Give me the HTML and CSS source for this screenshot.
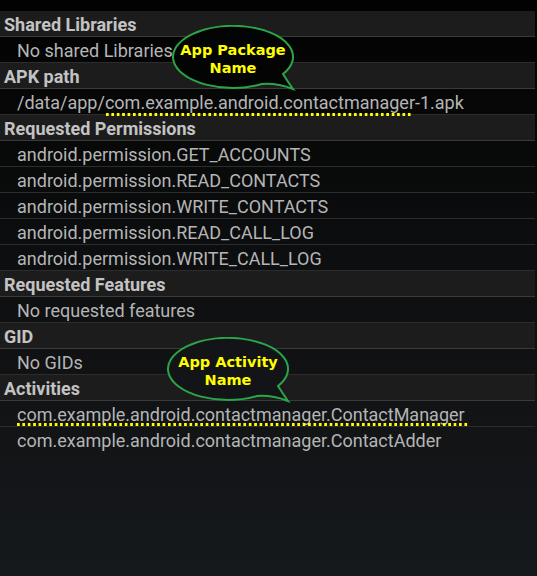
FILE: index.html
```html
<!DOCTYPE html>
<html>
<head>
<meta charset="utf-8">
<link rel="stylesheet" href="styles.css">
</head>
<body>
<div class="screen">
  <div class="list">
    <div class="hdr">Shared Libraries</div>
    <div class="item">No shared Libraries</div>
    <div class="hdr">APK path</div>
    <div class="item">/data/app/com.example.android.contactmanager-1.apk</div>
    <div class="hdr">Requested Permissions</div>
    <div class="item">android.permission.GET_ACCOUNTS</div>
    <div class="item">android.permission.READ_CONTACTS</div>
    <div class="item">android.permission.WRITE_CONTACTS</div>
    <div class="item">android.permission.READ_CALL_LOG</div>
    <div class="item">android.permission.WRITE_CALL_LOG</div>
    <div class="hdr">Requested Features</div>
    <div class="item">No requested features</div>
    <div class="hdr">GID</div>
    <div class="item">No GIDs</div>
    <div class="hdr">Activities</div>
    <div class="item">com.example.android.contactmanager.ContactManager</div>
    <div class="item last">com.example.android.contactmanager.ContactAdder</div>
  </div>

  <div class="dots dots-pkg"></div>
  <div class="dots dots-act"></div>

  <div class="bubble bubble-pkg">
    <svg class="bubble-shape" width="126" height="68" viewBox="0 0 126 68">
      <path d="M91,59 A60,31 0 1 1 112,49 Q117,57 122,64 Q106,58 91,59 Z" fill="#040404" stroke="#2aa548" stroke-width="2"/>
    </svg>
    <div class="bubble-text">App Package<br>Name</div>
  </div>

  <div class="bubble bubble-act">
    <svg class="bubble-shape" width="126" height="68" viewBox="0 0 126 68">
      <path d="M91,59 A60,31 0 1 1 112,49 Q117,57 122,64 Q106,58 91,59 Z" fill="#121417" stroke="#2aa548" stroke-width="2"/>
    </svg>
    <div class="bubble-text">App Activity<br>Name</div>
  </div>
</div>
</body>
</html>
```
FILE: styles.css
```css
html, body {
  margin: 0;
  padding: 0;
  height: 100%;
}
body {
  background: linear-gradient(to bottom, #020202 0%, #0d0e0f 45%, #16191c 100%);
  font-family: Roboto, "Noto Sans", sans-serif;
}
.screen {
  position: relative;
  padding-top: 11px;
  width: 537px;
  height: 576px;
  box-sizing: border-box;
}
.list {
  display: flex;
  flex-direction: column;
  width: 535px;
}
.hdr, .item {
  height: 22px;
  line-height: 22px;
  padding-top: 3px;
  font-size: 18px;
  white-space: nowrap;
  overflow: hidden;
}
.hdr {
  background: #1c1c1d;
  color: #c3c3c3;
  font-weight: bold;
  padding-left: 4px;
  border-bottom: 1px solid #3a3a3a;
}
.item {
  color: #b5b5b5;
  padding-left: 17px;
  border-bottom: 1px solid #2c2c2c;
}
.item.last {
  border-bottom-color: transparent;
}
.dots {
  position: absolute;
  height: 3px;
  background-image: linear-gradient(to right, #ffff00 0, #ffff00 3px, transparent 3px);
  background-size: 5.4px 3px;
}
.dots-pkg {
  left: 106px;
  top: 113px;
  width: 307px;
}
.dots-act {
  left: 17px;
  top: 423px;
  width: 451px;
}
.bubble {
  position: absolute;
  width: 126px;
  height: 68px;
}
.bubble-pkg {
  left: 171px;
  top: 25px;
}
.bubble-act {
  left: 166px;
  top: 337px;
}
.bubble-shape {
  position: absolute;
  left: 0;
  top: 0;
}
.bubble-text {
  position: absolute;
  left: 0;
  top: 0;
  width: 124px;
  padding-top: 16px;
  text-align: center;
  font-family: "DejaVu Sans", Verdana, sans-serif;
  font-weight: bold;
  font-size: 14.5px;
  line-height: 18px;
  color: #ffff00;
}
```
